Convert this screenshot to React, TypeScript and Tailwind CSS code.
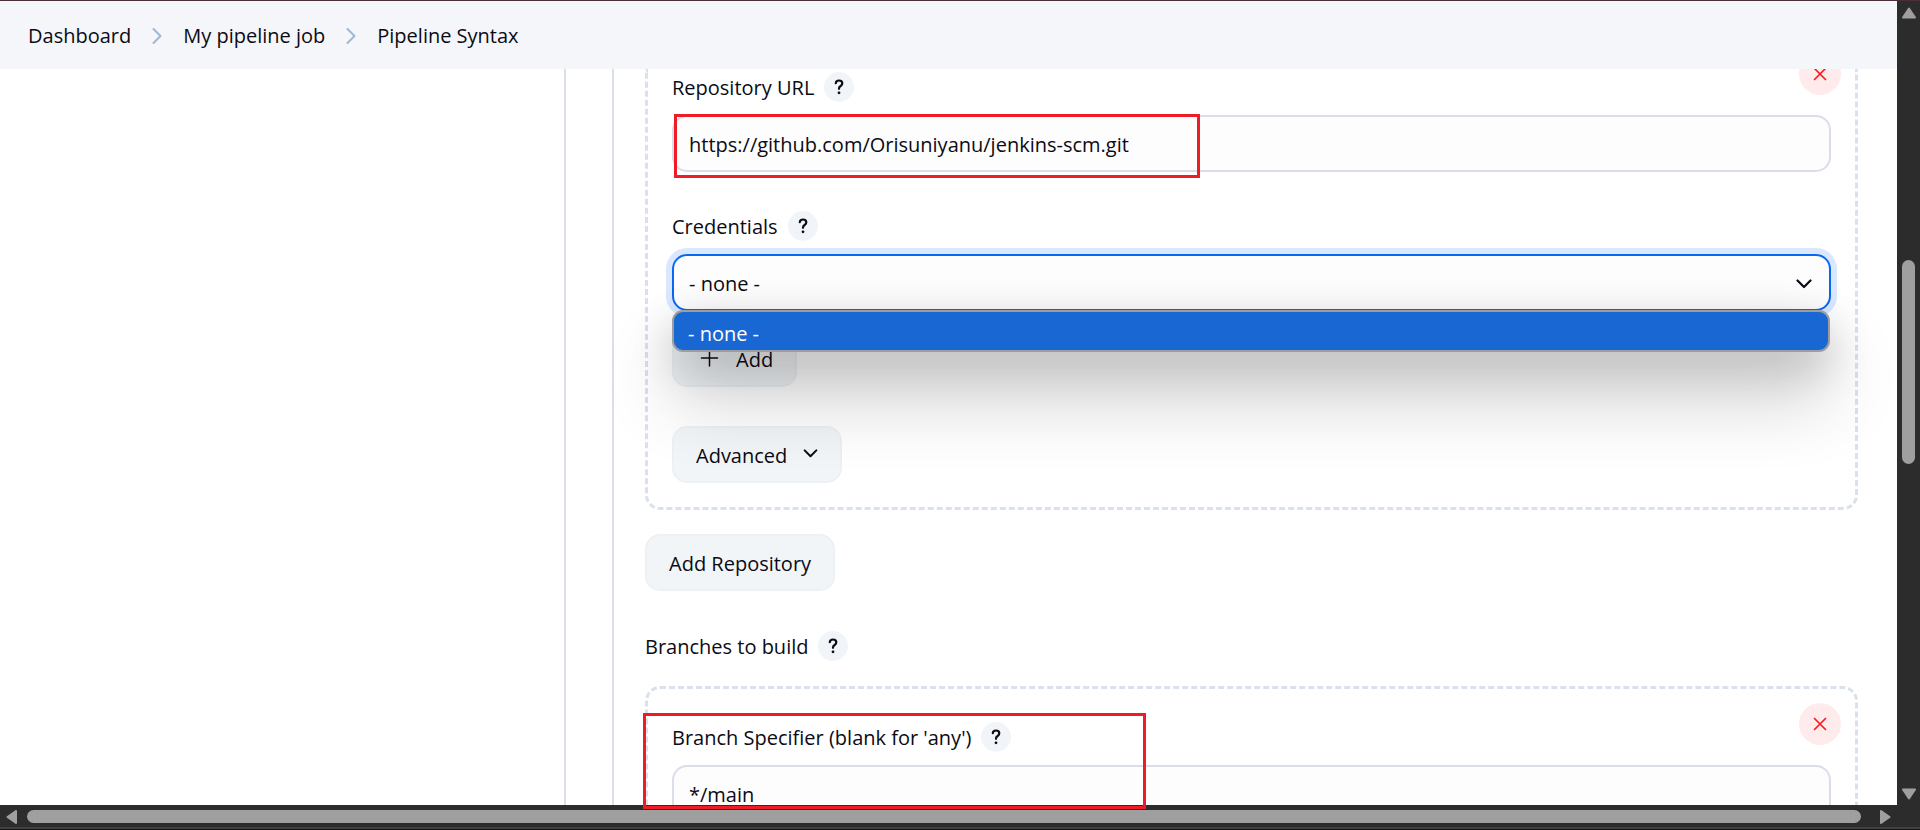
import React from "react";

function Chevron() {
  return (
    <svg width="10" height="18" viewBox="0 0 10 18" fill="none" stroke="#9fb6d6" strokeWidth="2" strokeLinecap="round" strokeLinejoin="round" aria-hidden="true">
      <path d="M1.500 2 8.500 9l-7 7" />
    </svg>
  );
}

function ChevronDown({ width, height }: { width: number; height: number }) {
  return (
    <svg width={width} height={height} viewBox="0 0 16 10" fill="none" stroke="#0b0b14" strokeWidth="2.200" strokeLinecap="round" strokeLinejoin="round" aria-hidden="true">
      <path d="M1.500 1.500 8 8l6.500-6.500" />
    </svg>
  );
}

function Help({ topic }: { topic: string }) {
  return (
    <button type="button" aria-label={`Help for ${topic}`} className="flex size-[30px] items-center justify-center rounded-full bg-[#f1f5f9]">
      <svg width="10" height="16" viewBox="0 0 10 16" fill="none" stroke="#0b0b14" strokeWidth="2.200" strokeLinecap="round" strokeLinejoin="round" aria-hidden="true">
        <path d="M1.800 4.200C1.900 2.500 3.200 1.500 5 1.500c1.900 0 3.300 1.100 3.300 2.800 0 1.300-.7 2-1.700 2.700C5.500 7.700 5 8.300 5 9.400v.4" />
        <circle cx="5" cy="13.800" r="1.400" fill="#0b0b14" stroke="none" />
      </svg>
    </button>
  );
}

function FieldLabel({ text, htmlFor }: { text: string; htmlFor?: string }) {
  return (
    <div className="flex h-[30px] items-center gap-[10px]">
      {htmlFor ? <label htmlFor={htmlFor} className="pt-[2px]">{text}</label> : <h2 className="pt-[2px]">{text}</h2>}
      <Help topic={text} />
    </div>
  );
}

function RemoveButton({ label, className }: { label: string; className: string }) {
  return (
    <button type="button" aria-label={label} className={`absolute right-[14px] flex size-[42px] items-center justify-center rounded-full bg-[#ffebeb] ${className}`}>
      <svg width="14" height="14" viewBox="0 0 14 14" stroke="#fb1a22" strokeWidth="1.700" strokeLinecap="round" aria-hidden="true">
        <path d="M1.500 1.500l11 11M12.500 1.500l-11 11" />
      </svg>
    </button>
  );
}

const field = "h-[57px] w-full rounded-[15px] border-2 bg-[#fdfdfd] px-[15px] pt-[2px] outline-none";
const button = "flex h-[57px] items-center rounded-[15px] border-2 border-[#edf1f5] bg-[#f2f5f8] px-[22px] pt-[2px]";

export default function App() {
  return (
    <div className="relative flex h-screen flex-col overflow-hidden bg-white font-['Open_Sans','Noto_Sans',sans-serif] text-[20px] leading-[28px] text-[#0b0b14]">
      <div className="h-px shrink-0 bg-[#4a2f37]" />
      <div className="flex min-h-0 flex-1">
        <div className="flex min-w-0 flex-1 flex-col">
          <nav aria-label="Breadcrumb" className="flex h-17 shrink-0 items-center gap-[21px] bg-[#f5f6f9] px-7 pt-px">
            <a href="#dashboard">Dashboard</a>
            <Chevron />
            <a href="#job">My pipeline job</a>
            <Chevron />
            <a href="#syntax">Pipeline Syntax</a>
          </nav>
          <div className="flex min-h-0 flex-1 overflow-hidden">
            <aside className="w-[566px] shrink-0 border-r-2 border-[#d9deea]" />
            <main className="ml-[46px] min-w-0 flex-1 border-l-2 border-[#d9deea] pr-[39px] pl-[31px]">
              <section className="relative rounded-b-[15px] border-3 border-t-0 border-dashed border-[#d9e1ec] px-6 pt-[3px] pb-6">
                <RemoveButton label="Remove repository" className="-top-4" />
                <FieldLabel text="Repository URL" htmlFor="url" />
                <div className="relative mt-[13px]">
                  <input id="url" type="text" defaultValue="https://github.com/Orisuniyanu/jenkins-scm.git" className={`${field} border-[#d9deea]`} />
                  <div className="pointer-events-none absolute -top-px left-[2px] h-16 w-[526px] border-3 border-[#ee1c25]" />
                </div>
                <div className="mt-[39px]">
                  <FieldLabel text="Credentials" htmlFor="credentials" />
                </div>
                <div className="relative mt-[13px]">
                  <select id="credentials" className={`${field} block appearance-none border-[#0968f0] shadow-[0_0_0_6px_#d9e7ff]`}>
                    <option>- none -</option>
                  </select>
                  <div className="pointer-events-none absolute top-[25px] right-[19px]">
                    <ChevronDown width={16} height={10} />
                  </div>
                  <ul role="listbox" aria-label="Credentials" className="absolute top-[56px] right-px left-0 z-10 h-[42px] overflow-hidden rounded-[11px] border-2 border-[#9b9da1] bg-[#1967d2] shadow-[0_44px_72px_rgba(0,0,0,0.240),0_16px_44px_rgba(0,0,0,0.200)]">
                    <li role="option" aria-selected="true" className="flex h-full items-center pt-[5px] pl-[14px] text-white">- none -</li>
                  </ul>
                </div>
                <button type="button" className={`${button} mt-[19px] gap-[14px]`}>
                  <svg width="26" height="26" viewBox="0 0 26 26" stroke="#0b0b14" strokeWidth="1.500" strokeLinecap="round" className="-mt-1" aria-hidden="true">
                    <path d="M13.500 5v16M5.500 13h16" />
                  </svg>
                  Add
                </button>
                <button type="button" className={`${button} mt-[39px] gap-4`}>
                  Advanced
                  <span className="pb-1">
                    <ChevronDown width={15} height={9} />
                  </span>
                </button>
              </section>
              <button type="button" className={`${button} mt-6`}>Add Repository</button>
              <div className="mt-10">
                <FieldLabel text="Branches to build" />
              </div>
              <section className="relative mt-[25px] rounded-[15px] border-3 border-dashed border-[#d9e1ec] px-6 pt-[33px] pb-6">
                <RemoveButton label="Remove branch" className="top-[14px]" />
                <FieldLabel text="Branch Specifier (blank for 'any')" htmlFor="branch" />
                <input id="branch" type="text" defaultValue="*/main" className={`${field} mt-[13px] border-[#d9deea]`} />
              </section>
            </main>
          </div>
        </div>
        <div aria-hidden="true" className="flex w-[23px] shrink-0 flex-col items-center bg-[#2c2c2c] pt-[6px] pb-[5px]">
          <svg width="14" height="12" viewBox="0 0 14 12" fill="#9f9f9f" stroke="#9f9f9f" strokeWidth="2" strokeLinejoin="round">
            <path d="M7 1.500 13 10.500H1z" />
          </svg>
          <div className="flex w-[13px] flex-1 flex-col">
            <div className="grow-[241]" />
            <div className="grow-[204] rounded-full bg-[#9f9f9f]" />
            <div className="grow-[324]" />
          </div>
          <svg width="14" height="12" viewBox="0 0 14 12" fill="#9f9f9f" stroke="#9f9f9f" strokeWidth="2" strokeLinejoin="round">
            <path d="M7 10.500 13 1.500H1z" />
          </svg>
        </div>
      </div>
      <div aria-hidden="true" className="flex h-[25px] shrink-0 flex-col bg-[#2c2c2c]">
        <div className="flex h-[22px] items-center pt-px pr-[29px] pl-[6px]">
          <svg width="11" height="14" viewBox="0 0 11 14" fill="#9f9f9f" stroke="#9f9f9f" strokeWidth="2" strokeLinejoin="round">
            <path d="M1.500 7 10 1v12z" />
          </svg>
          <div className="mr-[19px] ml-[10px] h-[13px] flex-1 rounded-full bg-[#9f9f9f]" />
          <svg width="11" height="14" viewBox="0 0 11 14" fill="#9f9f9f" stroke="#9f9f9f" strokeWidth="2" strokeLinejoin="round">
            <path d="M9.500 7 1 1v12z" />
          </svg>
        </div>
        <div className="h-[2px] bg-[#414141]" />
        <div className="h-px bg-[#151515]" />
      </div>
      <div className="pointer-events-none absolute top-[713px] left-[643px] h-24 w-[503px] border-3 border-[#ee1c25]" />
    </div>
  );
}
